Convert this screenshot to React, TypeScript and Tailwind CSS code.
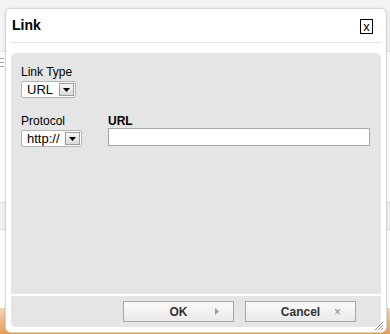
import React from "react";

function FakeSelect({ value, width }: { value: string; width: string }) {
  return (
    <div className={`flex h-[17px] items-center rounded-[2px] border border-[#b3b3b3] bg-white ${width}`}>
      <span className="flex-1 pl-[5px] text-[13px] leading-none text-black">{value}</span>
      <span className="mr-[1px] flex h-[13px] w-[15px] items-center justify-center border border-[#9c9c9c] bg-gradient-to-b from-[#f6f6f6] to-[#dadada]">
        <svg width="7" height="4" viewBox="0 0 7 4">
          <path d="M0 0h7L3.5 4z" fill="#000" />
        </svg>
      </span>
    </div>
  );
}

function DlgButton({ label, icon }: { label: string; icon: React.ReactNode }) {
  return (
    <button className="relative flex h-[21px] w-[111px] items-center justify-center border border-[#a6a6a6] bg-gradient-to-b from-[#fbfbfb] to-[#e9e9e9] text-[12px] font-bold text-[#333]">
      {label}
      <span className="absolute right-[14px] top-0 flex h-full items-center">{icon}</span>
    </button>
  );
}

export default function App() {
  return (
    <div className="relative h-[334px] w-[390px] overflow-hidden bg-[#f4f4f6] font-['Liberation_Sans',Arial,sans-serif]">
      {/* page behind the dialog */}
      <div className="flex h-full flex-col">
        <div className="h-[52px] border-b border-[#e2e2e2] bg-[#f4f4f6]" />
        <div className="flex h-[150px] flex-col gap-[3px] bg-white pt-[6px]">
          <div className="h-[1px] w-[4px] bg-[#aaa]" />
          <div className="h-[1px] w-[4px] bg-[#aaa]" />
          <div className="h-[1px] w-[4px] bg-[#aaa]" />
        </div>
        <div className="h-[28px] border-y border-[#dcdcdc] bg-[#f2f2f2]" />
        <div className="flex-1 bg-white" />
        <div className="h-[26px] bg-gradient-to-b from-[#f3d6b6] to-[#e59c56]" />
      </div>

      {/* dialog */}
      <div className="absolute left-[5px] top-[8px] flex h-[325px] w-[382px] flex-col rounded-[6px] border border-[#d6d6d6] bg-white shadow-[0_0_3px_rgba(0,0,0,0.12)]">
        <div className="mx-[4px] flex h-[34px] items-center justify-between border-b border-[#e3e3e3] pl-[2px] pr-[9px]">
          <span className="text-[14px] font-bold text-black">Link</span>
          <button className="mt-[1px] flex h-[15px] w-[13px] items-center justify-center border border-black bg-white text-[13px] leading-none text-black">
            x
          </button>
        </div>

        <div className="mx-[5px] mb-[5px] mt-[10px] flex flex-1 flex-col rounded-[5px] bg-[#e5e5e5]">
          <div className="flex flex-1 flex-col pl-[10px] pr-[11px] pt-[12px]">
            <div className="flex flex-col gap-[2px]">
              <span className="text-[12px] leading-[14px] text-black">Link Type</span>
              <FakeSelect value="URL" width="w-[55px]" />
            </div>

            <div className="mt-[16px] flex gap-[26px]">
              <div className="flex flex-col gap-[2px]">
                <span className="text-[12px] leading-[14px] text-black">Protocol</span>
                <FakeSelect value="http://" width="w-[61px]" />
              </div>
              <div className="flex flex-1 flex-col gap-[0px]">
                <span className="text-[12px] font-bold leading-[14px] text-black">URL</span>
                <div className="h-[18px] border border-[#a6a6a6] bg-white" />
              </div>
            </div>
          </div>

          <div className="flex h-[33px] items-start justify-end gap-[11px] border-t-2 border-white pr-[25px] pt-[5px]">
            <DlgButton
              label="OK"
              icon={
                <svg width="4" height="7" viewBox="0 0 4 7">
                  <path d="M0 0l4 3.5L0 7z" fill="#9a9a9a" />
                </svg>
              }
            />
            <DlgButton label="Cancel" icon={<span className="text-[12px] font-normal text-[#8a8a8a]">×</span>} />
          </div>
        </div>

        <svg className="absolute bottom-[1px] right-[2px]" width="10" height="10" viewBox="0 0 10 10">
          <path d="M9 1L1 9M9 4L4 9M9 7L7 9" stroke="#8c8c8c" strokeWidth="1" />
        </svg>
      </div>
    </div>
  );
}
